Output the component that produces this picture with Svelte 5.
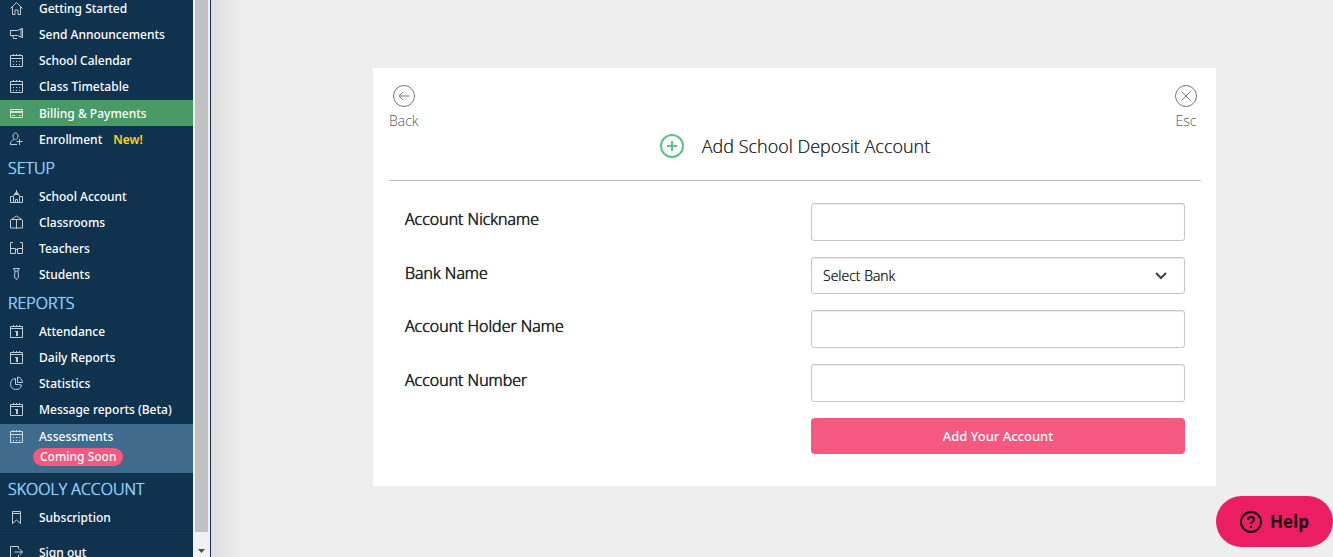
<script lang="ts">
  type Item = { label: string; icon: string; active?: boolean; isNew?: boolean; soon?: boolean };
  type Section = { title?: string; items: Item[] };

  const sections: Section[] = [
    {
      items: [
        { label: "Getting Started", icon: "home" },
        { label: "Send Announcements", icon: "megaphone" },
        { label: "School Calendar", icon: "calendar" },
        { label: "Class Timetable", icon: "calendar" },
        { label: "Billing & Payments", icon: "card", active: true },
        { label: "Enrollment", icon: "userAdd", isNew: true },
      ],
    },
    {
      title: "SETUP",
      items: [
        { label: "School Account", icon: "school" },
        { label: "Classrooms", icon: "classroom" },
        { label: "Teachers", icon: "glasses" },
        { label: "Students", icon: "tie" },
      ],
    },
    {
      title: "REPORTS",
      items: [
        { label: "Attendance", icon: "day" },
        { label: "Daily Reports", icon: "day" },
        { label: "Statistics", icon: "pie" },
        { label: "Message reports (Beta)", icon: "day" },
        { label: "Assessments", icon: "calendar", soon: true },
      ],
    },
    {
      title: "SKOOLY ACCOUNT",
      items: [{ label: "Subscription", icon: "bookmark" }],
    },
  ];

  const icons: Record<string, string> = {
    home: "M.5 7.5 6.500 1.500l6 6M2.500 6v7.500h2.500V9h3v4.500h2.500V6",
    megaphone: "M.5 3.500h7L11 2v8L7.500 8.500H.5zM11 1.500h1.500v9H11M2.500 8.500l1 3h3.500",
    calendar: "M.5 2.500h12v11H.5zM.5 5.500h12M3.500 1v2M6.500 1v2M9.500 1v2M3 8.500h1M6 8.500h1M9 8.500h1M3 11.500h1M6 11.500h1M9 11.500h1",
    card: "M.5 3.500h12v8H.5zM1 5.500h11M1 6.500h11M2 9.500h3M9 9.500h2",
    userAdd: "M5.500 1C3.800 1 3 2.200 3 4s1 3.500 2.500 3.500S8 5.800 8 4 7.200 1 5.500 1zM4 7.500C1.500 8.500.5 9.500.5 12.500H7M9.500 7v6M6.500 9.500h6",
    school: "M.5 7.500h3v6H.5zM9.500 7.500h3v6h-3zM5.500 13.500v-3h2v3M3.500 7l1.500-2M9.500 7 8 5M6.500 1v3M3.500 13.500h6",
    classroom: "M.5 5 6.500 1l6 4M1.500 4.500h10M.5 5v8H6l.5.5.5-.5h5.500V5M6.500 5v8.500",
    glasses: "M3 1.500H.5v11h5v-5H.5M10 1.500h2.500v11h-5v-5h5M5.500 8.500h2",
    tie: "M3.500 1.500h6L8 4H5zM5 4 4.500 10l2 2.500 2-2.500L8 4",
    day: "M.5 2.500h12v11H.5zM.5 4.500h12M3.500 1v2M6.500 1v2M9.500 1v2",
    pie: "M5.500 2.500a5.500 5.500 0 1 0 6 6.500L8.500 8.500h-3zM7.500 1v5.500h5A5.500 5.500 0 0 0 7.500 1z",
    bookmark: "M2.500 1.500h8v12l-4-3.500-4 3.500zM2.500 3.500h8",
    signout: "M8.500 4V1.500h-8v12h8V10M4.500 7h8M9.500 4l3 3-3 3",
  };

  // Parts drawn filled on top of the outlines
  const solids: Record<string, string> = {
    school: "M6.500 2l3 4h-6z",
    day: "M5 7h3v5H6V8H5z",
  };

  let nickname = $state("");
  let bank = $state("");
  let holder = $state("");
  let number = $state("");
</script>

{#snippet icon(name: string)}
  <svg class="icon" viewBox="0 0 14 14" aria-hidden="true">
    <path d={icons[name]} />
    {#if solids[name]}
      <path class="solid" d={solids[name]} />
    {/if}
  </svg>
{/snippet}

<div class="layout">
  <aside>
    <nav>
      {#each sections as section}
        {#if section.title}
          <h2>{section.title}</h2>
        {/if}
        <ul>
          {#each section.items as item}
            <li class:active={item.active} class:soon={item.soon}>
              <a href="#{item.icon}">
                {@render icon(item.icon)}
                <span>{item.label}</span>
                {#if item.isNew}
                  <em>New!</em>
                {/if}
              </a>
              {#if item.soon}
                <span class="pill">Coming Soon</span>
              {/if}
            </li>
          {/each}
        </ul>
      {/each}
      <ul class="signout">
        <li>
          <a href="#signout">{@render icon("signout")}<span>Sign out</span></a>
        </li>
      </ul>
    </nav>
    <div class="scrollbar">
      <div class="thumb"></div>
      <svg viewBox="0 0 7 4" aria-hidden="true"><path d="M0 0h7L3.500 4z" /></svg>
    </div>
  </aside>

  <main>
    <section class="card">
      <div class="controls">
        <button type="button">
          <svg viewBox="0 0 24 24" aria-hidden="true">
            <circle cx="12" cy="12" r="10.500" />
            <path d="M17.500 12H7M11 8l-4 4 4 4" />
          </svg>
          Back
        </button>
        <button type="button">
          <svg viewBox="0 0 24 24" aria-hidden="true">
            <circle cx="12" cy="12" r="10.500" />
            <path d="M7.500 7.500l9 9M16.500 7.500l-9 9" />
          </svg>
          Esc
        </button>
      </div>

      <header>
        <svg viewBox="0 0 24 24" aria-hidden="true">
          <circle cx="12" cy="12" r="11" />
          <path d="M12 7v10M7 12h10" />
        </svg>
        <h1>Add School Deposit Account</h1>
      </header>

      <form onsubmit={(e) => e.preventDefault()}>
        <label for="nickname">Account Nickname</label>
        <input id="nickname" type="text" bind:value={nickname} />

        <label for="bank">Bank Name</label>
        <div class="select">
          <select id="bank" bind:value={bank}>
            <option value="">Select Bank</option>
          </select>
          <svg viewBox="0 0 12 8" aria-hidden="true"><path d="M1 1l5 5 5-5" /></svg>
        </div>

        <label for="holder">Account Holder Name</label>
        <input id="holder" type="text" bind:value={holder} />

        <label for="number">Account Number</label>
        <input id="number" type="text" bind:value={number} />

        <button class="submit" type="submit">Add Your Account</button>
      </form>
    </section>
  </main>
</div>

<button class="help" type="button">
  <svg viewBox="0 0 22 22" aria-hidden="true">
    <circle cx="11" cy="11" r="10" />
    <path d="M8 9c0-2 1.300-3 3-3s3 1 3 2.700c0 2-3 2.200-3 4.300" />
    <path d="M11 15v2" />
  </svg>
  Help
</button>

<style>
  :global(body) {
    background: #eee;
    font-family: "Open Sans", "Noto Sans", sans-serif;
    font-weight: 300;
    overflow: hidden;
  }
  button,
  input,
  select {
    font-family: inherit;
    font-weight: inherit;
    box-sizing: border-box;
    margin: 0;
  }
  button {
    cursor: pointer;
    border: 0;
  }

  .layout {
    display: flex;
    height: 100vh;
  }

  /* Sidebar */
  aside {
    flex: 0 0 211px;
    display: flex;
    box-sizing: border-box;
    border-right: 1px solid #0f334e;
    background: #0f334e;
    overflow: hidden;
  }
  nav {
    flex: 1;
    margin-top: -5px;
  }
  nav h2 {
    margin: 0;
    padding: 2px 0 0 8px;
    font-size: 16px;
    font-weight: 300;
    line-height: 29px;
    color: #8ecbfa;
    text-shadow: 0 0 0 #8ecbfa, 0 0 1px #8ecbfa;
  }
  ul {
    margin: 0;
    padding: 0;
    list-style: none;
  }
  nav a {
    display: flex;
    align-items: center;
    height: 26px;
    padding-left: 10px;
    color: #fff;
    text-decoration: none;
  }
  nav a,
  .pill {
    font-family: "Noto Sans", sans-serif;
    font-size: 12px;
    font-weight: 500;
  }
  .icon {
    width: 14px;
    height: 14px;
    margin-right: 15px;
    fill: none;
    stroke: #fff;
    opacity: 0.75;
  }
  .icon .solid {
    fill: #fff;
    stroke: none;
  }
  nav em {
    margin-left: 11px;
    font-style: normal;
    font-weight: 600;
    color: #ffd027;
  }
  .active {
    margin-top: 1px;
    background: #489b67;
  }
  .soon {
    margin-top: 2px;
    padding-bottom: 7px;
    background: #3e6b8e;
  }
  .soon a {
    height: 24px;
  }
  .pill {
    display: block;
    width: max-content;
    margin-left: 33px;
    padding: 0 7px;
    border-radius: 9px;
    background: #f6597f;
    color: #fff;
    line-height: 18px;
  }
  .signout {
    margin-top: 4px;
    padding-top: 4px;
    border-top: 1px solid #0e2d45;
  }
  .scrollbar {
    flex: 0 0 17px;
    display: flex;
    flex-direction: column;
    align-items: center;
    background: #f1f1f1;
  }
  .thumb {
    flex: 1;
    width: 13px;
    background: #c1c1c1;
  }
  .scrollbar svg {
    width: 7px;
    height: 4px;
    margin: 17px 0 4px;
    fill: #505050;
  }

  /* Content */
  main {
    flex: 1;
    padding: 68px 117px 0 162px;
    background: linear-gradient(to right, #dfdfdf, #eee 32px);
  }
  .card {
    padding: 16px 15px 32px 16px;
    background: #fff;
  }
  .controls {
    display: flex;
    justify-content: space-between;
    padding-right: 3px;
  }
  .controls button {
    display: flex;
    flex-direction: column;
    align-items: center;
    gap: 4px;
    padding: 0;
    background: none;
    color: #555;
    font-size: 14px;
    line-height: 18px;
  }
  .controls svg {
    width: 24px;
    height: 24px;
    fill: none;
    stroke: #777;
  }
  header {
    display: flex;
    justify-content: center;
    align-items: center;
    gap: 18px;
    padding: 4px 0 22px;
    border-bottom: 1px solid #bbb;
  }
  header svg {
    width: 24px;
    height: 24px;
    fill: none;
    stroke: #5ec287;
    stroke-width: 2;
  }
  h1 {
    margin: 0;
    font-size: 18px;
    font-weight: 300;
    line-height: 24px;
    color: #333;
    text-shadow: 0 0 0 #333;
  }

  form {
    display: grid;
    grid-template-columns: 1fr 1fr;
    gap: 16px 32px;
    padding: 22px 16px 0;
  }
  label {
    font-size: 16px;
    line-height: 32px;
    color: #222;
    text-shadow: 0 0 0 #222, 0 0 1px #222;
  }
  input,
  select {
    width: 100%;
    height: 38px;
    padding: 0 11px;
    border: 1px solid #c6c6c6;
    border-radius: 3px;
    background: #fff;
    box-shadow: inset 0 1px 1px rgba(0, 0, 0, 0.08);
    color: #222;
    font-size: 14px;
  }
  select {
    display: block;
    height: 37px;
    appearance: none;
    text-shadow: 0 0 0 #222;
  }
  .select {
    position: relative;
  }
  .select svg {
    position: absolute;
    top: 15px;
    right: 18px;
    width: 12px;
    height: 8px;
    fill: none;
    stroke: #444;
    stroke-width: 2;
    pointer-events: none;
  }
  .submit {
    grid-column: 2;
    height: 36px;
    border-radius: 4px;
    background: #f6597f;
    color: #fff;
    font-family: "Noto Sans", sans-serif;
    font-size: 13px;
    font-weight: 500;
  }

  .help {
    position: fixed;
    right: 0;
    bottom: 10px;
    display: flex;
    align-items: center;
    gap: 8px;
    height: 51px;
    padding: 0 24px;
    border-radius: 26px;
    background: #eb1e63;
    color: #1f0410;
    font-size: 17px;
    font-weight: 700;
  }
  .help svg {
    width: 22px;
    height: 22px;
    fill: none;
    stroke: #1f0410;
    stroke-width: 2;
  }
</style>
